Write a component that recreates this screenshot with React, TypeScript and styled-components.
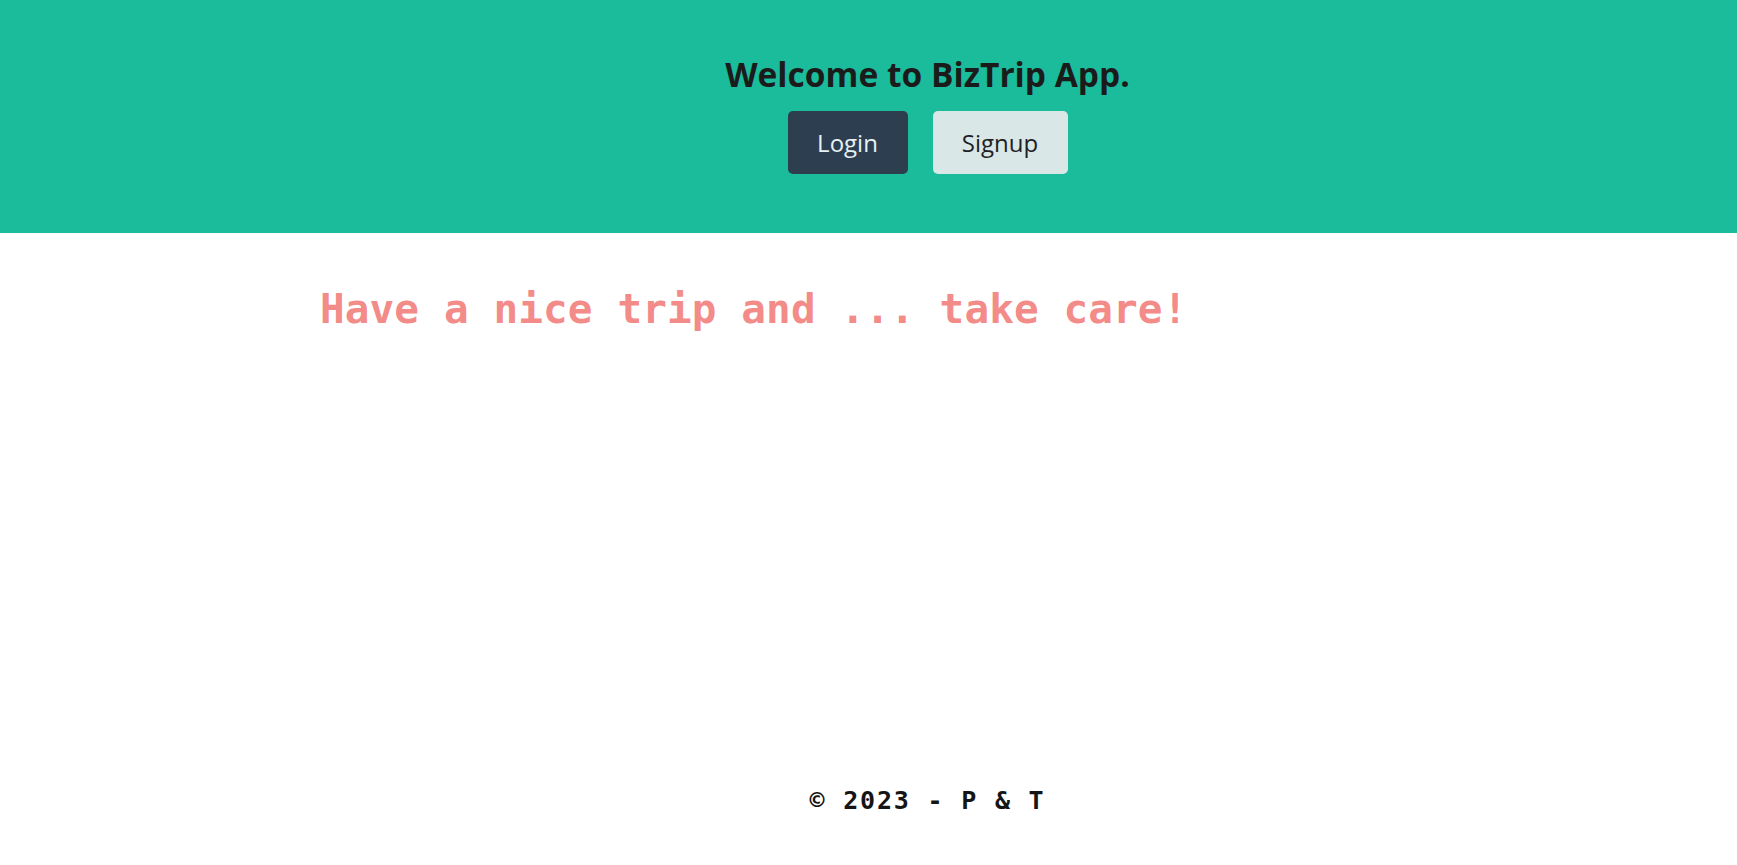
import React from "react";
import styled, { createGlobalStyle } from "styled-components";

const GlobalStyle = createGlobalStyle`
  html, body { margin: 0; padding: 0; background: #ffffff; }
  body { font-family: "Open Sans", "Noto Sans", sans-serif; }
  * { box-sizing: border-box; }
`;

const Page = styled.div`
  min-height: 100vh;
  display: flex;
  flex-direction: column;
`;

const Header = styled.header`
  background: #1abc9c;
  height: 233px;
  padding: 54px 0 0 118px;
  display: flex;
  flex-direction: column;
  align-items: center;
`;

const Title = styled.h1`
  margin: 0;
  font-family: "Open Sans", "Noto Sans", sans-serif;
  font-weight: 700;
  font-size: 33.5px;
  line-height: 40px;
  color: #1b1b1b;
`;

const ButtonRow = styled.div`
  display: flex;
  gap: 25px;
  margin-top: 17px;
`;

const Button = styled.button<{ $variant: "dark" | "light" }>`
  height: 63px;
  width: ${(p) => (p.$variant === "dark" ? "120px" : "135px")};
  border: none;
  border-radius: 5px;
  font-family: "Open Sans", "Noto Sans", sans-serif;
  font-size: 24px;
  font-weight: 400;
  cursor: pointer;
  background: ${(p) => (p.$variant === "dark" ? "#2e3e51" : "#d9e8e6")};
  color: ${(p) => (p.$variant === "dark" ? "#e6f1f3" : "#1f1f26")};
`;

const Main = styled.main`
  flex: 1;
  padding: 52px 0 0 320px;
`;

const Tagline = styled.p`
  margin: 0;
  font-family: "DejaVu Sans Mono", "Liberation Mono", monospace;
  font-weight: 700;
  font-size: 41px;
  line-height: 48px;
  letter-spacing: 0.1px;
  color: #f38b88;
`;

const Footer = styled.footer`
  padding: 0 0 50px 118px;
  display: flex;
  justify-content: center;
`;

const FooterText = styled.p`
  margin: 0;
  font-family: "DejaVu Sans Mono", "Liberation Mono", monospace;
  font-weight: 700;
  font-size: 25px;
  line-height: 28px;
  letter-spacing: 1.8px;
  color: #151515;
`;

export default function App() {
  return (
    <Page>
      <GlobalStyle />
      <Header>
        <Title>Welcome to BizTrip App.</Title>
        <ButtonRow>
          <Button $variant="dark">Login</Button>
          <Button $variant="light">Signup</Button>
        </ButtonRow>
      </Header>
      <Main>
        <Tagline>Have a nice trip and ... take care!</Tagline>
      </Main>
      <Footer>
        <FooterText>© 2023 - P &amp; T</FooterText>
      </Footer>
    </Page>
  );
}
